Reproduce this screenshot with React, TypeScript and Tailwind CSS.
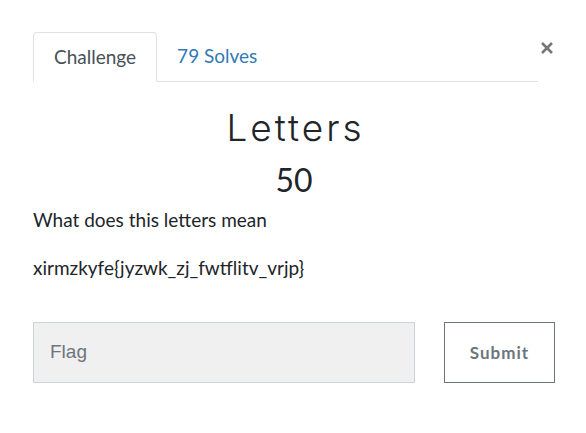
export default function App() {
  return (
    <div className="w-[586px] h-[433px] bg-white pl-[33px] pr-[31px] pt-[32px] font-['Lato','Liberation_Sans',sans-serif] text-[#212529]">
      <div className="flex items-start">
        <div className="flex-1 flex border-b border-[#dee2e6] h-[50px]">
          <div className="h-[50px] px-[20px] flex items-center border border-[#dee2e6] border-b-white rounded-t-[4px] bg-white text-[19px] text-[#495057] -mb-px">
            Challenge
          </div>
          <div className="h-[49px] px-[20px] flex items-center text-[19px] text-[#337ab7]">
            79 Solves
          </div>
        </div>
        <div className="w-[17px] h-[30px] flex items-center justify-end mt-[1px] pr-[1px]">
          <svg width="14" height="14" viewBox="0 0 14 14">
            <path d="M2 2 L12 12 M12 2 L2 12" stroke="#777" strokeWidth="2.6" strokeLinecap="butt" />
          </svg>
        </div>
      </div>
      <div className="text-center mt-[24px]">
        <div className="text-[37px] leading-[44px] font-light tracking-[3px] pl-[3px] font-['Inter','Lato',sans-serif] text-[#212529]">
          Letters
        </div>
        <div className="text-[32px] leading-[40px] mt-[10px]">50</div>
      </div>
      <div className="mt-[8px] text-[19px] leading-[24px]">What does this letters mean</div>
      <div className="mt-[24px] text-[19px] leading-[24px]">xirmzkyfe{'{'}jyzwk_zj_fwtflitv_vrjp{'}'}</div>
      <div className="mt-[42px] flex">
        <div className="w-[382px] h-[61px] bg-[#f0f0f0] border border-[#ced4da] flex items-center pl-[16px] text-[19px] text-[#6c757d] font-['Liberation_Sans',sans-serif]">
          Flag
        </div>
        <div className="ml-[29px] w-[111px] h-[61px] border border-[#6c757d] flex items-center justify-center text-[17px] font-bold tracking-[1px] text-[#6c757d]">
          Submit
        </div>
      </div>
    </div>
  );
}
